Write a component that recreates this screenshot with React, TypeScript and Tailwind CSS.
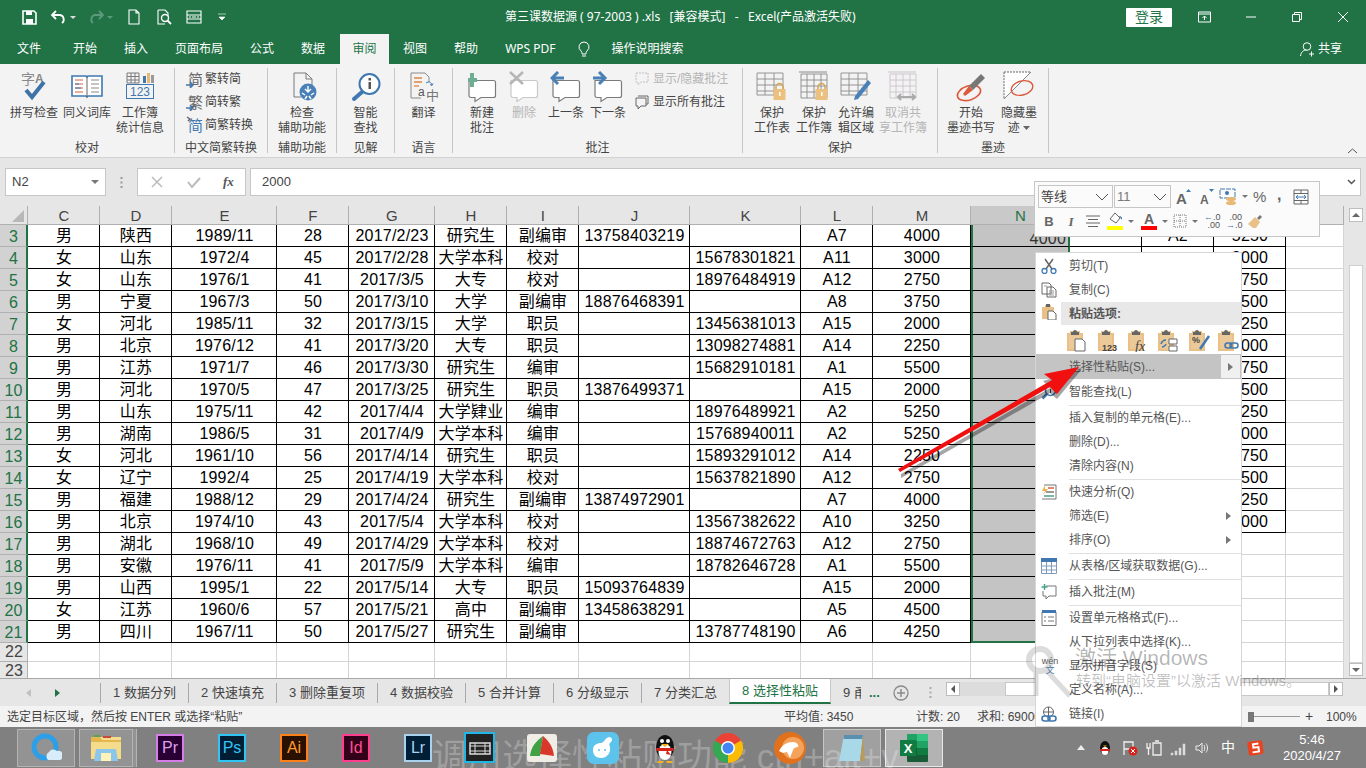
import React from "react";

type Kids = { children?: React.ReactNode };
type SP = { s: number; w?: number; h?: number; children?: React.ReactNode; className?: string };
const I = ({ s, h, children, className }: SP) => (
  <svg width={s} height={h ?? s} viewBox={`0 0 ${s} ${h ?? s}`} fill="none" className={className}>{children}</svg>
);

/* ---------- quick access ---------- */
const Qat = () => (
  <div className="flex items-center w-[505px] h-full pl-[22px] text-white">
    <I s={15}><path d="M1 1h11l2 2v11H1z" stroke="#fff" strokeWidth="1.6" /><rect x="4" y="1" width="6" height="4" fill="#fff" /><rect x="4" y="9" width="7" height="5" fill="#fff" /></I>
    <I s={18} className="ml-[13px]"><path d="M6 3 2 7l4 4M2 7h8a4.500 4.500 0 0 1 2 8" stroke="#fff" strokeWidth="1.8" /></I>
    <I s={6} className="ml-[2px]"><path d="M0 2h6L3 5z" fill="#ddd" /></I>
    <I s={18} className="ml-[11px]"><path d="M12 3l4 4-4 4M16 7H8a4.500 4.500 0 0 0-2 8" stroke="#5c9a7c" strokeWidth="1.8" /></I>
    <I s={6} className="ml-[2px]"><path d="M0 2h6L3 5z" fill="#5c9a7c" /></I>
    <I s={14} h={16} className="ml-[14px]"><path d="M2 1h7l3 3v11H2zM9 1v3h3" stroke="#fff" strokeWidth="1.1" /></I>
    <I s={16} className="ml-[15px]"><path d="M2 1h7l3 3v3M2 1v14h7" stroke="#fff" strokeWidth="1.1" /><circle cx="9" cy="9" r="3.5" stroke="#fff" strokeWidth="1.4" /><path d="m11.500 11.500 3.500 3.500" stroke="#fff" strokeWidth="1.8" /></I>
    <I s={16} className="ml-[14px]"><path d="M1 2h14v12H1zM1 6h14M1 10h14M5 8H3m8 0h2M6 8h4" stroke="#fff" strokeWidth="1.1" /></I>
    <I s={8} className="ml-[16px]"><path d="M0 1h8M1 4h6L4 7z" fill="#fff" stroke="#fff" strokeWidth=".6" /></I>
  </div>
);

const WinCtl = () => (
  <div className="flex items-center h-full">
    <div className="w-[46px] h-[19px] bg-white rounded-[1px] flex items-center justify-center text-[14px] text-[#217346]">登录</div>
    <I s={14} h={12} className="ml-[26px]"><path d="M.5 1h12v10H.5zM.5 3h12M6.500 9V5M4.500 7l2-2 2 2" stroke="#fff" /></I>
    <I s={10} h={2} className="ml-[34px]"><path d="M0 1h10" stroke="#fff" /></I>
    <I s={10} className="ml-[36px]"><path d="M.5 2.500h7v7h-7zM2.500 2.500v-2h7v7h-2" stroke="#fff" /></I>
    <I s={10} className="ml-[36px]"><path d="m0 0 10 10M10 0 0 10" stroke="#fff" /></I>
  </div>
);

const TabRow = () => (
  <div className="flex items-end h-[30px] text-[12px] text-white">
    <div className="flex items-center h-[30px] pl-[17px] gap-[32px]">
      <span>文件</span>
      <div className="flex items-center gap-[27px]">
        <span>开始</span><span>插入</span><span>页面布局</span><span>公式</span><span>数据</span>
      </div>
    </div>
    <div className="ml-[15px] w-[49px] h-[30px] bg-[#f3f3f3] text-[#217346] flex items-center justify-center">审阅</div>
    <div className="flex items-center h-[30px] ml-[14px] gap-[27px]">
      <span>视图</span><span>帮助</span><span className="font-['Noto_Sans','Liberation_Sans',sans-serif]">WPS PDF</span>
    </div>
    <div className="flex items-center h-[30px] ml-[20px]">
      <I s={16}><path d="M8 1a5 5 0 0 0-3 9c1 1 1 2 1 3h4c0-1 0-2 1-3a5 5 0 0 0-3-9zM6 15h4" stroke="#fff" /></I>
      <span className="ml-[20px]">操作说明搜索</span>
    </div>
    <div className="flex items-center h-[30px] ml-auto pr-[24px]">
      <I s={16}><circle cx="8" cy="5.500" r="3.800" stroke="#fff" /><path d="M1.500 15c.5-4 3-6 6-6M10 13h5M12.500 10.500v5" stroke="#fff" /></I>
      <span className="ml-[3px]">共享</span>
    </div>
  </div>
);

/* ---------- ribbon icons ---------- */
const Spell = () => (
  <I s={30} className="mb-[2px]">
    <text x="2" y="13" fontSize="14" fill="#8a8a8a">字</text>
    <text x="16" y="12" fontSize="12" fill="#8a8a8a" fontWeight="bold">A</text>
    <path d="m7 19 6 7L25 11" stroke="#3f73a8" strokeWidth="4" />
  </I>
);
const Book = () => (
  <I s={32}>
    <path d="M1 5h14l1 1 1-1h14v20H17l-1 1-1-1H1z" fill="#fff" stroke="#3f78b0" strokeWidth="1.6" />
    <path d="M4 9h8M4 13h8M4 17h8M4 21h8" stroke="#d9603c" /><path d="M20 9h8M20 13h8M20 17h8M20 21h8" stroke="#8a8a8a" />
    <path d="M16 6v20" stroke="#666" />
    <path d="M4 13h4" stroke="#3f78b0" /><path d="M4 17h6" stroke="#3f78b0" />
  </I>
);
const Stats = () => (
  <I s={30}>
    <path d="M2 1h12v10H2zM2 4.500h12M2 8h12M6 1v10M10 1v10" stroke="#7b7b7b" />
    <rect x="18" y="4" width="3" height="7" fill="#3f78b0" /><rect x="22" y="1" width="3" height="10" fill="#e8b873" /><rect x="26" y="3" width="3" height="8" fill="#999" />
    <rect x="1.500" y="12.500" width="27" height="14" stroke="#3f78b0" />
    <text x="15" y="24" fontSize="12" textAnchor="middle" fill="#3f78b0">123</text>
  </I>
);
const SmallGlyph = ({ g, c = "#666", kind }: { g: string; c?: string; kind: number }) => (
  <I s={18}>
    <text x="2" y="15" fontSize="15" fill={c}>{g}</text>
    {kind === 0 && <path d="M0 15h7M4 12l3 3-3 3" stroke="#3f78b0" strokeWidth="1.5" />}
    {kind === 1 && <path d="M0 15h7M4 12l3 3-3 3" stroke="#3f78b0" strokeWidth="1.5" />}
    {kind === 2 && <path d="M1 1l3 2-2 2" stroke="#666" strokeWidth="1.5" />}
  </I>
);
const Access = () => (
  <I s={30}>
    <path d="M7 1h12l6 6v6M7 1v24h7M19 1v6h6" stroke="#7b7b7b" />
    <circle cx="21" cy="20" r="8.500" fill="#4a80b8" />
    <path d="M21 14v6M18 17l3 3 3-3M15 21l3 2M27 21l-3 2M18 27l2-3M24 27l-2-3" stroke="#fff" strokeWidth="1.4" />
  </I>
);
const Lookup = () => (
  <I s={30}>
    <circle cx="18.500" cy="12" r="10" fill="#fff" stroke="#3f78b0" strokeWidth="2" />
    <path d="m11 20-8 7" stroke="#3f78b0" strokeWidth="4" strokeLinecap="round" />
    <rect x="17.500" y="10" width="2.500" height="7" fill="#555" /><rect x="17.500" y="6" width="2.500" height="2.500" fill="#555" />
  </I>
);
const Translate = () => (
  <I s={30}>
    <path d="M2 1h14l4 4v5M2 1v25h10" stroke="#8a8a8a" />
    <path d="M5 6h8M5 10h8" stroke="#e0873c" strokeWidth="1.3" /><path d="M5 14h5" stroke="#e0873c" strokeWidth="1.3" />
    <path d="M17 11c3-2 5-1 6 2m-2-.5 2 1 1-2" stroke="#3f78b0" />
    <text x="9" y="24" fontSize="12" fill="#555">a</text>
    <text x="17" y="28" fontSize="13" fill="#777">中</text>
  </I>
);
const Bubble = ({ children, dim }: Kids & { dim?: boolean }) => (
  <I s={32}>
    <path d="M3 9.500h24.500a2 2 0 0 1 2 2v13a2 2 0 0 1-2 2H15l-6 4v-4H5a2 2 0 0 1-2-2z" fill="#fff" stroke={dim ? "#c8c8c8" : "#7b7b7b"} strokeWidth="1.2" />
    {children}
  </I>
);
const Lock = () => (
  <g><path d="M20 18v-2a3.500 3.500 0 0 1 7 0v2" stroke="#d7a552" strokeWidth="1.5" /><rect x="17.500" y="18" width="12" height="11" fill="#ecc07e" /><rect x="23" y="21" width="1.500" height="4" fill="#fff" /></g>
);
const SheetIcon = ({ c = "#8a8a8a", ext }: { c?: string; ext?: boolean }) => (
  <g>
    {ext && <path d="M1 1h28" stroke={c} />}
    <path d={ext ? "M3 3h26v24H3zM3 9h26M3 15h26M3 21h26M9 3v24M16 3v24M23 3v24" : "M1 2h26v22H1zM1 8h26M1 14h26M1 20h26M9 2v22M18 2v22"} stroke={c} strokeWidth=".9" />
  </g>
);
const Ink = () => (
  <I s={32}>
    <ellipse cx="14" cy="22" rx="12" ry="7" stroke="#dc5a3c" strokeWidth="1.6" transform="rotate(-18 14 22)" />
    <path d="M26 3l4 4-12 12-4-4z" fill="#777" />
    <path d="m14 15 4 4-8 6-2-2z" fill="#dc5a3c" />
  </I>
);
const InkHide = () => (
  <I s={32}>
    <path d="M1 1h27L1 28z" fill="#fff" stroke="#666" strokeDasharray="2 1" />
    <path d="M1 28 28 1" stroke="#888" />
    <ellipse cx="19" cy="17" rx="11" ry="7" stroke="#dc5a3c" strokeWidth="1.4" transform="rotate(-15 19 17)" />
  </I>
);

/* ---------- ribbon parts ---------- */
const Big = ({ w, icon, a, b, dim }: { w: string; icon: React.ReactNode; a: string; b?: React.ReactNode; dim?: boolean }) => (
  <div className={`${w} flex flex-col items-center text-center ${dim ? "text-[#b5b5b5]" : "text-[#444]"}`}>
    <div className="h-[37px] flex items-center justify-center">{icon}</div>
    <div className="leading-[15px] mt-px whitespace-nowrap">{a}</div>
    {b && <div className="leading-[15px] whitespace-nowrap">{b}</div>}
  </div>
);
const Group = ({ w, label, pad, children }: Kids & { w: string; label: string; pad?: string }) => (
  <div className={`${w} h-[85px] mt-[4px] border-r border-[#c6c6c6] flex flex-col shrink-0`}>
    <div className={`h-[72px] flex ${pad ?? ""}`}>{children}</div>
    <div className="text-center leading-[17px] h-[13px] text-[#444]">{label}</div>
  </div>
);
const Small = ({ icon, t, dim }: { icon: React.ReactNode; t: string; dim?: boolean }) => (
  <div className={`h-[23px] pb-[2px] flex items-center whitespace-nowrap ${dim ? "text-[#b5b5b5]" : "text-[#444]"}`}>
    <div className="w-[19px]">{icon}</div><span>{t}</span>
  </div>
);

const Ribbon = () => (
  <div className="flex h-[94px] bg-[#f3f3f3] border-b border-[#d2d2d2] text-[12px] relative">
    <Group w="w-[175px]" label="校对" pad="pl-[8px]">
      <Big w="w-[52px]" icon={<Spell />} a="拼写检查" />
      <Big w="w-[54px]" icon={<Book />} a="同义词库" />
      <Big w="w-[52px]" icon={<Stats />} a="工作簿" b="统计信息" />
    </Group>
    <Group w="w-[93px]" label="中文简繁转换" pad="pl-[11px] flex-col">
      <Small icon={<SmallGlyph g="简" kind={0} />} t="繁转简" />
      <Small icon={<SmallGlyph g="繁" kind={1} />} t="简转繁" />
      <Small icon={<SmallGlyph g="简" c="#3f78b0" kind={2} />} t="简繁转换" />
    </Group>
    <Group w="w-[69px]" label="辅助功能"><Big w="w-[69px]" icon={<Access />} a="检查" b="辅助功能" /></Group>
    <Group w="w-[58px]" label="见解"><Big w="w-[60px]" icon={<Lookup />} a="智能" b="查找" /></Group>
    <Group w="w-[58px]" label="语言"><Big w="w-[58px]" icon={<Translate />} a="翻译" /></Group>
    <Group w="w-[290px]" label="批注" pad="pl-[8px]">
      <Big w="w-[42px]" icon={<Bubble><path d="M6 2v14M2 9h9" stroke="#6fae95" strokeWidth="4" /></Bubble>} a="新建" b="批注" />
      <Big w="w-[42px]" dim icon={<Bubble dim><path d="m2 1 13 12M15 1 2 13" stroke="#b5b5b5" strokeWidth="2.500" /></Bubble>} a="删除" />
      <Big w="w-[42px]" icon={<Bubble><path d="M14 7H3M8 1 2 7l6 6" stroke="#4a80b8" strokeWidth="3" /></Bubble>} a="上一条" />
      <Big w="w-[42px]" icon={<Bubble><path d="M1 7h11M7 1l6 6-6 6" stroke="#4a80b8" strokeWidth="3" /></Bubble>} a="下一条" />
      <div className="flex flex-col ml-[5px]">
        <Small dim icon={<I s={16}><path d="M2 2h12v9H7l-3 3v-3H2z" stroke="#c0c0c0" strokeDasharray="2 1" /></I>} t="显示/隐藏批注" />
        <Small icon={<I s={16}><path d="M4 2h10v8h-2M2 4h10v8H7l-3 3v-3H2z" stroke="#666" /></I>} t="显示所有批注" />
      </div>
    </Group>
    <Group w="w-[195px]" label="保护" pad="pl-[8px]">
      <Big w="w-[42px]" icon={<I s={32}><SheetIcon /><Lock /></I>} a="保护" b="工作表" />
      <Big w="w-[42px]" icon={<I s={32}><SheetIcon ext /><Lock /></I>} a="保护" b="工作簿" />
      <Big w="w-[42px]" icon={<I s={32}><SheetIcon /><path d="m28 9 3 3-13 16-4 1 1-4z" fill="#4a80b8" /></I>} a="允许编" b="辑区域" />
      <Big w="w-[52px]" dim icon={<I s={32}><SheetIcon ext c="#cbc4cc" /><path d="M11 26h17M14 23l-3 3 3 3M25 23l3 3-3 3" stroke="#aaa" strokeWidth="2" /></I>} a="取消共" b="享工作簿" />
    </Group>
    <Group w="w-[111px]" label="墨迹" pad="pl-[9px]">
      <Big w="w-[48px]" icon={<Ink />} a="开始" b="墨迹书写" />
      <Big w="w-[48px]" icon={<InkHide />} a="隐藏墨" b={<span>迹 <svg width="7" height="4" className="inline mb-[2px]"><path d="M0 0h7L3.500 4z" fill="#666" /></svg></span>} />
    </Group>
    <svg width="11" height="6" fill="none" className="absolute left-[1347px] top-[84px]"><path d="m1 5 4.500-4L10 5" stroke="#555" /></svg>
  </div>
);

const FormulaBar = () => (
  <div className="flex h-[48px] bg-[#e6e6e6] pt-[10px] pl-[5px]">
    <div className="w-[101px] h-[28px] bg-white border border-[#c6c6c6] flex items-center justify-between pl-[6px] pr-[6px] text-[13px] text-[#444]">
      <span>N2</span><svg width="8" height="4"><path d="M0 0h8L4 4z" fill="#777" /></svg>
    </div>
    <div className="w-[31px] h-[28px] flex items-center justify-center">
      <svg width="3" height="11"><path d="M1.500 0v2M1.500 4.500v2M1.500 9v2" stroke="#999" strokeWidth="2" /></svg>
    </div>
    <div className="w-[109px] h-[28px] bg-white border border-[#c6c6c6] flex items-center pl-[13px]">
      <I s={12}><path d="m1 1 10 10M11 1 1 11" stroke="#bbb" strokeWidth="1.500" /></I>
      <I s={14} className="ml-[24px]"><path d="m1 7 4 5 8-9" stroke="#bbb" strokeWidth="2" /></I>
      <span className="ml-[22px] text-[13px] italic font-['Liberation_Serif',serif] text-[#555] font-bold">fx</span>
    </div>
    <div className="ml-[4px] w-[1111px] h-[28px] bg-white border border-[#c6c6c6] flex items-center pl-[11px] text-[13px] text-[#444]">
      <span>2000</span>
      <svg width="9" height="6" fill="none" className="ml-auto mr-[4px]"><path d="m1 1 3.500 3.500L8 1" stroke="#555" strokeWidth="1.500" /></svg>
    </div>
  </div>
);

/* ---------- sheet ---------- */
const rows: string[][] = [
  ["男","陕西","1989/11","28","2017/2/23","研究生","副编审","13758403219","","A7","4000"],
  ["女","山东","1972/4","45","2017/2/28","大学本科","校对","","15678301821","A11","3000"],
  ["女","山东","1976/1","41","2017/3/5","大专","校对","","18976484919","A12","2750"],
  ["男","宁夏","1967/3","50","2017/3/10","大学","副编审","18876468391","","A8","3750"],
  ["女","河北","1985/11","32","2017/3/15","大学","职员","","13456381013","A15","2000"],
  ["男","北京","1976/12","41","2017/3/20","大专","职员","","13098274881","A14","2250"],
  ["男","江苏","1971/7","46","2017/3/30","研究生","编审","","15682910181","A1","5500"],
  ["男","河北","1970/5","47","2017/3/25","研究生","职员","13876499371","","A15","2000"],
  ["男","山东","1975/11","42","2017/4/4","大学肄业","编审","","18976489921","A2","5250"],
  ["男","湖南","1986/5","31","2017/4/9","大学本科","编审","","15768940011","A2","5250"],
  ["女","河北","1961/10","56","2017/4/14","研究生","职员","","15893291012","A14","2250"],
  ["女","辽宁","1992/4","25","2017/4/19","大学本科","校对","","15637821890","A12","2750"],
  ["男","福建","1988/12","29","2017/4/24","研究生","副编审","13874972901","","A7","4000"],
  ["男","北京","1974/10","43","2017/5/4","大学本科","校对","","13567382622","A10","3250"],
  ["男","湖北","1968/10","49","2017/4/29","大学本科","校对","","18874672763","A12","2750"],
  ["男","安徽","1976/11","41","2017/5/9","大学本科","编审","","18782646728","A1","5500"],
  ["男","山西","1995/1","22","2017/5/14","大专","职员","15093764839","","A15","2000"],
  ["女","江苏","1960/6","57","2017/5/21","高中","副编审","13458638291","","A5","4500"],
  ["男","四川","1967/11","50","2017/5/27","研究生","副编审","","13787748190","A6","4250"],
];
const right = ["5250","3000","2750","3500","5250","2000","2750","3500","5250","2000","2750","3500","4250","3000"];
const HEAD = ["C","D","E","F","G","H","I","J","K","L","M","N","O","P","Q","R"];
const cell = "flex items-center justify-center overflow-hidden whitespace-nowrap pl-px";
const black = `${cell} border-r border-b border-black`;
const light = `${cell} border-r border-b border-[#d4d4d4]`;

const Sheet = () => (
  <div className="flex h-[472px] overflow-hidden">
    <div className="w-[1344px] grid grid-cols-[28px_72px_72px_105px_72px_86px_72px_72px_111px_111px_72px_98px_99px_72px_72px_72px_58px] grid-rows-[19px_repeat(19,22px)_19px_19px] text-[16px] tracking-[0.2px] leading-none text-black bg-white">
      <div className="bg-[#e6e6e6] border-b border-r border-[#b0b0b0] flex items-end justify-end pr-[3px] pb-[2px]">
        <svg width="12" height="12"><path d="M12 0v12H0z" fill="#b8b8b8" /></svg>
      </div>
      {HEAD.map((h) => (
        <div key={h} className={`${cell} text-[15px] border-r border-b border-[#b0b0b0] ${h === "N" ? "bg-[#c9c9c9] text-[#217346]" : "bg-[#e6e6e6] text-[#444]"} ${h === "R" ? "pl-[12px]" : ""}`}>{h}</div>
      ))}
      {rows.map((r, i) => (
        <React.Fragment key={i}>
          <div className={`${cell} bg-[#d2d2d2] text-[#217346] border-b border-[#b0b0b0] border-r-2 border-r-[#217346] pt-[3px]`}>{i + 3}</div>
          {r.map((v, j) => <div key={j} className={black}>{v}</div>)}
          <div className={`flex items-center justify-end pr-[2px] bg-[#c4c4c4] border-x-2 border-x-[#217346] border-b text-[#333] ${i === 0 ? "pt-[6px]" : ""} ${i === 18 ? "border-b-2 border-b-[#217346]" : "border-b-black"}`}>{i === 0 ? "4000" : ""}</div>
          <div className={i < 14 ? black : light} />
          <div className={i < 14 ? black : light}>{i === 0 ? "A2" : ""}</div>
          <div className={i < 14 ? black : light}>{i < 14 ? right[i] : ""}</div>
          <div className={light} />
        </React.Fragment>
      ))}
      {[22, 23].map((n) => (
        <React.Fragment key={n}>
          <div className={`${cell} bg-[#e6e6e6] text-[#444] border-b border-r border-[#b0b0b0]`}>{n}</div>
          {HEAD.map((h) => <div key={h} className={light} />)}
        </React.Fragment>
      ))}
    </div>
    <div className="w-[22px] bg-[#e6e6e6] flex flex-col items-start pl-[5px] pt-[2px]">
      <div className="w-[14px] h-[14px] bg-white border border-[#bdbdbd] flex items-center justify-center">
        <svg width="8" height="4"><path d="M0 4h8L4 0z" fill="#666" /></svg>
      </div>
      <div className="w-[14px] h-[398px] mt-[43px] bg-white border border-[#d0d0d0]" />
      <div className="w-[14px] h-[13px] bg-white border border-[#bdbdbd] flex items-center justify-center">
        <svg width="8" height="4"><path d="M0 0h8L4 4z" fill="#666" /></svg>
      </div>
    </div>
  </div>
);

const TabCell = ({ w, t }: { w: string; t: string }) => (
  <div className={`${w} h-[20px] border-r border-[#a8a8a8] flex items-center justify-center whitespace-nowrap`}>{t}</div>
);

const SheetTabs = () => (
  <div className="flex items-center h-[28px] bg-[#e6e6e6] border-t border-[#a8a8a8] text-[13px] text-[#444]">
    <div className="w-[101px] h-[20px] border-r border-[#a8a8a8] flex items-center pl-[26px]">
      <svg width="5" height="8"><path d="M5 0v8L0 4z" fill="#c0c0c0" /></svg>
      <svg width="5" height="8" className="ml-[24px]"><path d="M0 0v8l5-4z" fill="#217346" /></svg>
    </div>
    <TabCell w="w-[88px]" t="1 数据分列" />
    <TabCell w="w-[88px]" t="2 快速填充" />
    <TabCell w="w-[101px]" t="3 删除重复项" />
    <TabCell w="w-[88px]" t="4 数据校验" />
    <TabCell w="w-[88px]" t="5 合并计算" />
    <TabCell w="w-[88px]" t="6 分级显示" />
    <div className="w-[87px] h-[20px] flex items-center justify-center whitespace-nowrap">7 分类汇总</div>
    <div className="w-[102px] self-stretch mb-[2px] bg-white border-b-2 border-[#217346] border-x border-x-[#c8c8c8] text-[#217346] flex items-center justify-center whitespace-nowrap">8 选择性粘贴</div>
    <div className="w-[30px] pl-[12px] overflow-hidden whitespace-nowrap">9 甬</div>
    <div className="w-[28px] text-[#217346] font-bold pl-[8px] leading-none">...</div>
    <I s={16} className="ml-[4px]"><circle cx="8" cy="8" r="7" stroke="#8a8a8a" strokeWidth="1.300" /><path d="M8 4v8M4 8h8" stroke="#8a8a8a" strokeWidth="1.500" /></I>
    <svg width="3" height="11" className="ml-[20px]"><path d="M1.500 0v2M1.500 4.500v2M1.500 9v2" stroke="#aaa" strokeWidth="2" /></svg>
    <div className="ml-[14px] flex items-center h-[14px] mb-[7px] w-[397px]">
      <div className="w-[14px] h-[14px] bg-white border border-[#bdbdbd] flex items-center justify-center"><svg width="4" height="8"><path d="M4 0v8L0 4z" fill="#555" /></svg></div>
      <div className="w-[45px] h-[14px] bg-[#dcdcdc]" />
      <div className="w-[324px] h-[14px] bg-white border border-[#c8c8c8]" />
      <div className="w-[14px] h-[14px] bg-white border border-[#bdbdbd] flex items-center justify-center"><svg width="4" height="8"><path d="M0 0v8l4-4z" fill="#555" /></svg></div>
    </div>
  </div>
);

const Status = () => (
  <div className="flex items-center h-[21px] bg-[#f3f3f3] text-[12px] text-[#444] pl-[7px] whitespace-nowrap">
    <span className="w-[777px]">选定目标区域，然后按 ENTER 或选择“粘贴”</span>
    <span className="w-[132px]">平均值: 3450</span>
    <span className="w-[61px]">计数: 20</span>
    <span className="w-[160px]">求和: 69000</span>
    <div className="w-[6px] h-[10px] bg-[#777] ml-[111px]" />
    <div className="w-[46px] h-px bg-[#999]" />
    <span className="w-[18px] text-center text-[14px]">+</span>
    <span className="ml-[8px]">100%</span>
  </div>
);

/* ---------- taskbar ---------- */
const Tile = ({ cls, t, tc }: { cls: string; t: string; tc: string }) => (
  <div className={`${cls} w-[28px] h-[28px] border-[2px] flex items-center justify-center text-[16px] font-medium ${tc}`}>{t}</div>
);
const Taskbar = () => (
  <div className="relative flex items-center h-[41px] bg-[#808080] overflow-hidden">
    <div className="absolute left-[432px] top-[10px] text-[35px] leading-[40px] text-white/25 whitespace-nowrap">调用选择性粘贴功能 ctrl+alt+v</div>
    <div className="relative flex items-center h-full">
      <div className="ml-[17px] w-[58px] h-[38px] bg-white/15 border border-white/30 flex items-center justify-center">
        <I s={32}><circle cx="15" cy="15" r="11" stroke="#2d9fe8" strokeWidth="5" /><path d="M18 28a5 5 0 0 1 1-8 5 5 0 0 1 8-1 4.500 4.500 0 0 1 3 9z" fill="#d8ecfa" /></I>
      </div>
      <div className="ml-[4px] w-[54px] h-[38px] bg-white/15 border border-white/30 flex items-center justify-center">
        <I s={32}><path d="M1 5h30v22H1z" fill="#f5dc8a" /><path d="M1 5h9l2 3h19v2H1z" fill="#e2b84e" /><rect x="4" y="3" width="6" height="2" fill="#5ea14b" /><rect x="13" y="4" width="8" height="2" fill="#c74a3a" /><path d="M6 17h20l2 12H4z" fill="#8cc6ea" /><rect x="11" y="21" width="10" height="8" fill="#fff3b8" /></I>
      </div>
      <div className="w-[4px] h-[38px] bg-white/15 border-r border-white/30" />
      <div className="ml-[19px]"><Tile cls="bg-[#2a0034] border-[#d57ee8]" t="Pr" tc="text-[#d9a0ee]" /></div>
      <div className="ml-[34px]"><Tile cls="bg-[#001d34] border-[#2fc6f6]" t="Ps" tc="text-[#31c5f4]" /></div>
      <div className="ml-[34px]"><Tile cls="bg-[#2a1000] border-[#ff7f18]" t="Ai" tc="text-[#ff9a2e]" /></div>
      <div className="ml-[34px]"><Tile cls="bg-[#33001a] border-[#ff3f8e]" t="Id" tc="text-[#ff4f96]" /></div>
      <div className="ml-[34px]"><Tile cls="bg-[#001e36] border-[#a9d2ef]" t="Lr" tc="text-[#a9d2ef]" /></div>
      <div className="ml-[32px] w-[31px] h-[31px] bg-[#222] border-[2px] border-[#21b6e8] flex items-center justify-center">
        <I s={22}><path d="M1 6h20v11H1z" stroke="#ddd" strokeWidth="1.500" /><path d="M1 9h20M1 14h20M6 6v11M16 6v11" stroke="#ddd" /></I>
      </div>
      <I s={30} className="ml-[32px]"><rect width="30" height="28" y="1" rx="3" fill="#f0ece6" /><path d="M3 23C4 14 9 8 16 3l-3 20z" fill="#3fa044" /><path d="M16 3c6 5 10 11 11 20l-14-2z" fill="#d9372c" /></I>
      <I s={32} className="ml-[30px]"><rect width="32" height="32" rx="7" fill="#5cc3ec" /><path d="M6 18c0-5 4-7 8-7 3 0 4-5 8-6 3 0 4 3 2 5-2 1-2 3-1 5 1 6-3 11-9 11-5 0-8-3-8-8z" fill="#fff" /><circle cx="12" cy="18" r="1" fill="#5cc3ec" /><circle cx="18" cy="18" r="1" fill="#5cc3ec" /></I>
      <I s={26} h={32} className="ml-[33px]"><ellipse cx="13" cy="15" rx="9" ry="12" fill="#111" /><ellipse cx="13" cy="20" rx="6.500" ry="8" fill="#fff" /><circle cx="10" cy="9" r="2" fill="#fff" /><circle cx="16" cy="9" r="2" fill="#fff" /><path d="M9 12h8l-4 3z" fill="#f5b21e" /><path d="M4 16h18l-1 3H5zM15 18l4 5-5-1z" fill="#d8231c" /><path d="M6 29h6l-1 2H5zM14 29h6l1 2h-6z" fill="#f5b21e" /></I>
      <I s={30} className="ml-[35px]"><circle cx="15" cy="15" r="15" fill="#ea4335" /><path d="M15 15 28 7.500A15 15 0 0 1 15 30z" fill="#fbbc05" /><path d="M15 15 15 30A15 15 0 0 1 2 7.500z" fill="#34a853" /><circle cx="15" cy="15" r="7" fill="#fff" /><circle cx="15" cy="15" r="5.500" fill="#4285f4" /></I>
      <I s={32} className="ml-[31px]"><circle cx="16" cy="16" r="16" fill="#e2711d" /><circle cx="19" cy="16" r="11" fill="#f4a35c" /><path d="M5 19c3-6 8-9 14-9 4 0 6 3 5 5-3 0-4 1-5 3l-3 8-3-6-4 1z" fill="#fff" /></I>
      <div className="ml-[17px] w-[58px] h-[38px] bg-white/25 border border-white/40 flex items-center justify-center">
        <I s={32}><path d="M8 3h19l-3 26H3z" fill="#a9d8e8" /><path d="M8 3h19l-.5 4H7.500z" fill="#5a8fb0" /><path d="M27 3l2 26h-5z" fill="#b89a5a" /></I>
      </div>
      <div className="ml-[4px] w-[58px] h-[38px] bg-white/40 border border-white/70 flex items-center justify-center">
        <I s={32}><rect x="9" y="2" width="21" height="28" rx="1" fill="#185c37" /><rect x="19" y="2" width="11" height="7" fill="#33c481" /><rect x="9" y="2" width="10" height="7" fill="#21a366" /><rect x="19" y="9" width="11" height="7" fill="#21a366" /><rect x="9" y="9" width="10" height="7" fill="#107c41" /><rect x="19" y="16" width="11" height="7" fill="#107c41" /><rect x="2" y="8" width="16" height="16" fill="#107c41" /><text x="10" y="21" fontSize="13" fontWeight="bold" fill="#fff" textAnchor="middle">X</text></I>
      </div>
    </div>
    <div className="relative ml-auto flex items-center h-full">
      <svg width="8" height="5"><path d="M0 5h8L4 0z" fill="#eee" /></svg>
      <I s={16} className="ml-[12px]"><ellipse cx="8" cy="8" rx="5" ry="7" fill="#111" /><ellipse cx="8" cy="11" rx="3.500" ry="4" fill="#fff" /><path d="M3 9h10v2H3z" fill="#d8231c" /><path d="M6 5.500h4L8 7z" fill="#f5b21e" /></I>
      <I s={16} className="ml-[9px]"><path d="M2 1v14M2 2h9v7H2" stroke="#eee" strokeWidth="1.300" /><circle cx="11" cy="11" r="4.500" fill="#d8231c" /><path d="m9 9 4 4m0-4-4 4" stroke="#fff" /></I>
      <I s={16} className="ml-[8px]"><path d="M1 3v5h3V3M2.500 8v7M7 3h8v12H7zM9 1h4" stroke="#eee" strokeWidth="1.300" /></I>
      <I s={16} className="ml-[8px]"><path d="M1 15v-2h2v2zm4 0v-4h2v4zm4 0V8h2v7zm4 0V4h2v11z" fill="#ddd" stroke="#ddd" strokeWidth=".5" /></I>
      <I s={16} className="ml-[8px]"><path d="M2 6v4h3l3 3V3L5 6z" stroke="#eee" /><path d="M10 5c1 2 1 4 0 6M12 3.500c2 3 2 6 0 9" stroke="#eee" /></I>
      <span className="ml-[11px] text-[14px] text-white w-[14px]">中</span>
      <I s={18} className="ml-[12px]"><rect x="1" y="2" width="15" height="14" rx="2" fill="#e8431e" transform="rotate(-8 8 9)" /><path d="M12 5H6.500v3.500h5V13H5" stroke="#fff" strokeWidth="2" transform="rotate(-8 8 9)" /></I>
      <div className="ml-[17px] mr-[24px] w-[60px] flex flex-col items-center text-[13px] leading-[16px] text-white">
        <span>5:46</span><span>2020/4/27</span>
      </div>
    </div>
  </div>
);

/* ---------- floating mini toolbar ---------- */
const Dd = ({ ml }: { ml?: string }) => (
  <svg width="6" height="3" className={ml ?? "ml-[5px]"}><path d="M0 0h6L3 3z" fill="#777" /></svg>
);
const Combo = ({ w, t, c }: { w: string; t: string; c: string }) => (
  <div className={`${w} h-[23px] border border-[#c6c6c6] flex items-center justify-between pl-[2px] pr-[3px] text-[13px] ${c}`}>
    <span>{t}</span>
    <svg width="14" height="8" fill="none"><path d="m1 1 6 6 6-6" stroke="#555" /></svg>
  </div>
);
const MiniToolbar = () => (
  <div className="absolute left-[1034px] top-[181px] w-[286px] h-[56px] bg-[#fbfbfb] border border-[#c6c6c6] pl-[3px] pt-[3px] text-[#666]">
    <div className="flex items-center h-[23px]">
      <Combo w="w-[75px]" t="等线" c="text-[#444]" />
      <div className="w-px" />
      <Combo w="w-[57px]" t="11" c="text-[#7a7a7a]" />
      <I s={18} className="ml-[3px]"><text x="2" y="16" fontSize="15" fontWeight="bold" fill="#666">A</text><path d="M12 4h5l-2.500-3z" fill="#3f78b0" /></I>
      <I s={18} className="ml-[5px]"><text x="3" y="16" fontSize="12" fontWeight="bold" fill="#666">A</text><path d="M12 1h5l-2.500 3z" fill="#3f78b0" /></I>
      <I s={18} className="ml-[4px]"><rect x="1" y="1" width="15" height="9" stroke="#3f78b0" strokeDasharray="5 1" /><circle cx="8" cy="5" r="2" fill="#3f78b0" /><ellipse cx="12" cy="11" rx="5" ry="2" fill="#e8b873" /><ellipse cx="12" cy="15" rx="5" ry="2" fill="#e8b873" /></I>
      <Dd />
      <span className="ml-[5px] text-[15px] w-[16px] leading-none">%</span>
      <span className="ml-[8px] text-[16px] font-bold leading-none w-[8px] mb-[4px]">,</span>
      <I s={16} className="ml-[8px]"><path d="M1 1h14v14H1zM1 4.500h14M1 11.500h14M8 1v3.500M8 11.500V15" stroke="#666" /><path d="M3 8h10M5 6 3 8l2 2m6-4 2 2-2 2" stroke="#3f78b0" /></I>
    </div>
    <div className="flex items-center h-[24px] mt-[1px] pl-[1px]">
      <span className="w-[20px] text-center text-[13px] font-bold leading-none">B</span>
      <span className="ml-[2px] w-[20px] text-center text-[13px] italic font-bold font-['Liberation_Serif',serif] leading-none">I</span>
      <I s={14} className="ml-[5px]"><path d="M0 2h14M2 5.500h10M0 9h14M2 12.500h10" stroke="#666" /></I>
      <div className="ml-[7px] flex flex-col items-center w-[16px]">
        <I s={14}><path d="m2 7 5-6 5 5-4 5z" stroke="#666" fill="#fff" /><path d="M11 4a3 3 0 0 1 3 4z" fill="#3f78b0" /></I>
        <div className="w-[16px] h-[4px] bg-[#ffff00]" />
      </div>
      <Dd />
      <div className="ml-[7px] flex flex-col items-center w-[16px]">
        <span className="text-[14px] leading-[14px] font-bold">A</span>
        <div className="w-[16px] h-[4px] bg-[#ff0000]" />
      </div>
      <Dd />
      <I s={14} className="ml-[5px]"><path d="M1 1h12v12H1zM7 1v12M1 7h12" stroke="#777" strokeDasharray="1 1" /></I>
      <Dd />
      <div className="ml-[6px] w-[16px] text-[9px] leading-[8px] text-right text-[#555]"><div className="text-left"><span className="text-[#3f78b0]">←</span>.0</div><div>.00</div></div>
      <div className="ml-[6px] w-[16px] text-[9px] leading-[8px] text-right text-[#555]"><div>.00</div><div className="text-left"><span className="text-[#3f78b0]">→</span>.0</div></div>
      <I s={16} className="ml-[5px]"><path d="m10 5 3-3 2 2-3 3z" fill="#777" /><path d="m8 4 5 5-4 6H6L1 11z" fill="#e8c088" /></I>
    </div>
  </div>
);

/* ---------- context menu ---------- */
const MI = ({ icon, t, arrow }: { icon?: React.ReactNode; t: string; arrow?: boolean }) => (
  <div className="h-[24px] flex items-center text-[12px] text-[#555] whitespace-nowrap">
    <div className="w-[33px] pl-[5px] shrink-0">{icon}</div>
    <span>{t}</span>
    {arrow && <svg width="5" height="8" className="ml-auto mr-[10px]"><path d="M0 0v8l5-4z" fill="#777" /></svg>}
  </div>
);
const Sep = () => <div className="h-[2px] ml-[33px] border-b border-[#e0e0e0]" />;
const PasteIcon = ({ children, cls }: Kids & { cls: string }) => (
  <I s={24} className={cls}>
    <path d="M2 5h3v-2h10v2h3v18H2z" fill="#e8c088" />
    <path d="M6 4h2a2 2 0 0 1 4 0h2v3H6z" fill="#666" />
    <path d="M4 7h12v14H4z" fill="#fff" opacity=".15" />
    {children}
  </I>
);
const ContextMenu = () => (
  <div className="absolute left-[1035px] top-[252px] w-[207px] h-[475px] bg-white border border-[#d6d6d6] pt-px">
    <MI t="剪切(T)" icon={<I s={16}><path d="M4 1l7 10M12 1 5 11" stroke="#666" strokeWidth="1.500" /><circle cx="3.500" cy="13" r="2.500" stroke="#3f78b0" strokeWidth="1.300" /><circle cx="12.500" cy="13" r="2.500" stroke="#3f78b0" strokeWidth="1.300" /></I>} />
    <MI t="复制(C)" icon={<I s={16}><path d="M1 1h7l2 2v9H1zM6 5h6l3 3v7H6z" fill="#fff" stroke="#666" /><path d="M8 9h5M8 11h5M8 13h5M3 4h3" stroke="#999" /></I>} />
    <div className="flex h-[23px]">
      <div className="w-[25px] pl-[5px] pt-[1px]"><I s={17}><path d="M1 4h3V2h6v2h3v12H1z" fill="#e8c088" /><path d="M5 1h4v3H5z" fill="#666" /><path d="M7 8h5l3 3v6H7z" fill="#fff" stroke="#666" /></I></div>
      <div className="flex-1 bg-[#e8e8e8] flex items-center pl-[8px] text-[12px] font-bold text-[#555]">粘贴选项:</div>
    </div>
    <div className="flex items-center h-[29px]">
      <PasteIcon cls="ml-[29px]"><path d="M10 11h7l3 3v9H10z" fill="#fff" stroke="#666" /></PasteIcon>
      <PasteIcon cls="ml-[7px]"><text x="6" y="23" fontSize="9" fontWeight="bold" fill="#444">123</text></PasteIcon>
      <PasteIcon cls="ml-[6px]"><text x="9" y="23" fontSize="14" fontStyle="italic" fill="#444" fontFamily="Liberation Serif">fx</text></PasteIcon>
      <PasteIcon cls="ml-[6px]"><path d="M5 16c1-3 3-4 5-4m0 4c-1 2-3 3-4 3" stroke="#3f78b0" strokeWidth="1.500" /><path d="M13 11h8v5h-8zM13 18h8v5h-8z" fill="#fff" stroke="#666" /></PasteIcon>
      <PasteIcon cls="ml-[7px]"><text x="5" y="15" fontSize="9" fontWeight="bold" fill="#444">%</text><path d="m22 8-9 13" stroke="#3f78b0" strokeWidth="2.500" /></PasteIcon>
      <PasteIcon cls="ml-[5px]"><rect x="9" y="15" width="7" height="5" rx="2.500" stroke="#3f78b0" strokeWidth="1.500" /><rect x="14" y="15" width="8" height="5" rx="2.500" stroke="#3f78b0" strokeWidth="1.500" /></PasteIcon>
    </div>
    <div className="h-[25px] flex items-center text-[12px] text-[#555] bg-[#c4c4c4] mb-px">
      <span className="pl-[33px] flex-1">选择性粘贴(S)...</span>
      <div className="w-[21px] h-full bg-[#f0f0f0] flex items-center justify-center border border-[#c4c4c4]"><svg width="5" height="8"><path d="M0 0v8l5-4z" fill="#777" /></svg></div>
    </div>
    <MI t="智能查找(L)" icon={<I s={16}><circle cx="9.500" cy="6.500" r="5" stroke="#3f78b0" strokeWidth="1.600" /><path d="M6 10 1.500 14.500" stroke="#3f78b0" strokeWidth="2.500" /><path d="M9.500 5v4" stroke="#444" /></I>} />
    <Sep />
    <MI t="插入复制的单元格(E)..." />
    <MI t="删除(D)..." />
    <MI t="清除内容(N)" />
    <Sep />
    <MI t="快速分析(Q)" icon={<I s={16}><path d="M3 1h12v14H1" stroke="#777" /><path d="M7 4h6" stroke="#d9603c" strokeWidth="1.500" /><path d="M5 8h8" stroke="#777" strokeWidth="1.500" /><path d="M3 12h10" stroke="#4aa08a" strokeWidth="1.500" /><path d="M4 1 1 7h3L2 11l5-6H4z" fill="#eab54c" /></I>} />
    <MI t="筛选(E)" arrow />
    <MI t="排序(O)" arrow />
    <Sep />
    <MI t="从表格/区域获取数据(G)..." icon={<I s={16}><rect x="0" y="0" width="16" height="4" fill="#3f78b0" /><path d="M.5 4v11.500h15V4M.5 8h15M.5 12h15M5.500 4v12M10.500 4v12" stroke="#7e9bbb" /></I>} />
    <Sep />
    <MI t="插入批注(M)" icon={<I s={16}><path d="M5 2h10v10H8l-3 3v-3H2V7" stroke="#777" /><path d="M3.500 0v6M.5 3h6" stroke="#4aa08a" strokeWidth="1.500" /></I>} />
    <Sep />
    <MI t="设置单元格格式(F)..." icon={<I s={16}><path d="M1 2h14v13.500H1z" stroke="#777" /><rect x="1" y="0" width="14" height="3" fill="#3f78b0" /><path d="M3 7h2M3 11h2M7 7h6M7 11h6" stroke="#777" /></I>} />
    <MI t="从下拉列表中选择(K)..." />
    <MI t="显示拼音字段(S)" icon={<div className="w-[18px] text-center text-[9px] leading-[9px] text-[#555]"><div>wén</div><div className="text-[#3f78b0]">文</div></div>} />
    <MI t="定义名称(A)..." />
    <MI t="链接(I)" icon={<I s={16}><circle cx="7.500" cy="6" r="5" stroke="#666" /><path d="M2.500 6h10M7.500 1v10" stroke="#666" /><rect x="1" y="10" width="8" height="5" rx="2.500" stroke="#3f78b0" strokeWidth="1.600" /><rect x="7" y="10" width="8" height="5" rx="2.500" stroke="#3f78b0" strokeWidth="1.600" /></I>} />
  </div>
);

const Activation = () => (
  <>
    <svg width="60" height="60" fill="none" className="absolute left-[1022px] top-[644px] opacity-25 pointer-events-none">
      <circle cx="18" cy="16" r="11" stroke="#777" strokeWidth="6" />
      <path d="M14 26v26M24 26l24 26" stroke="#777" strokeWidth="5" />
    </svg>
    <div className="absolute left-[1075px] top-[646px] text-[21px] leading-[24px] text-black/30 whitespace-nowrap pointer-events-none">激活 Windows</div>
    <div className="absolute left-[1076px] top-[672px] text-[15px] leading-[18px] text-black/25 whitespace-nowrap pointer-events-none">转到“电脑设置”以激活 Windows。</div>
  </>
);

const Arrow = () => (
  <svg width="1366" height="768" className="absolute left-0 top-0 pointer-events-none">
    <path d="M901 474 1050 388l-7-7 39-12-25 30-7-6-149 85z" fill="#000" opacity=".35" />
    <path d="M898 469 1052 380l-8-6 35-7-22 27-7-7-150 85z" fill="#f01010" />
  </svg>
);

export default function App() {
  return (
    <div className="relative w-[1366px] h-[768px] overflow-hidden flex flex-col font-['Liberation_Sans','Noto_Sans_CJK_SC',sans-serif] bg-white">
      <div className="bg-[#217346]">
        <div className="flex items-center h-[34px] text-[12px] text-white">
          <Qat />
          <div className="w-[621px] whitespace-nowrap font-['Noto_Sans','Noto_Sans_CJK_SC',sans-serif]">第三课数据源 ( 97-2003 ) .xls&nbsp;&nbsp;&nbsp;[兼容模式]&nbsp;&nbsp;&nbsp;-&nbsp;&nbsp;&nbsp;Excel(产品激活失败)</div>
          <WinCtl />
        </div>
        <TabRow />
      </div>
      <Ribbon />
      <FormulaBar />
      <Sheet />
      <SheetTabs />
      <Status />
      <Taskbar />
      <MiniToolbar />
      <ContextMenu />
      <Activation />
      <Arrow />
    </div>
  );
}
